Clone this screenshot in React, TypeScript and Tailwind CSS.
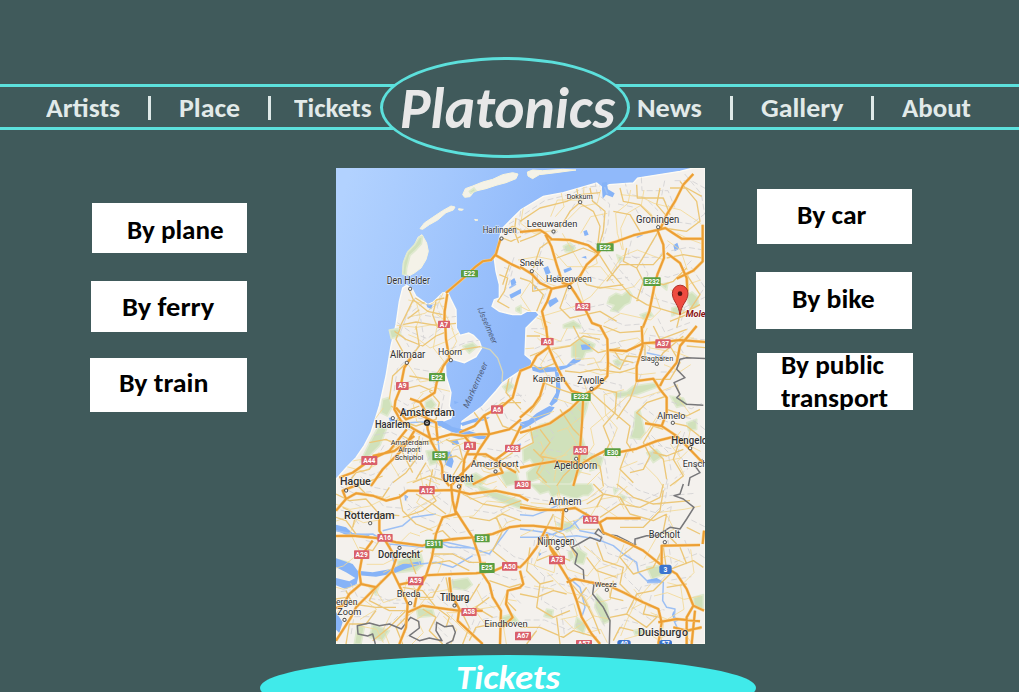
import { useLayoutEffect, useRef, useState, type ReactNode } from "react";

/* Text stretched horizontally to a given width. */
function Fit({ width, className = "", children }: { width: number; className?: string; children: ReactNode }) {
  const ref = useRef<HTMLSpanElement>(null);
  const [scale, setScale] = useState(1);
  useLayoutEffect(() => {
    if (ref.current) setScale(width / ref.current.offsetWidth);
  }, [width]);
  return (
    <span className={`block shrink-0 ${className}`} style={{ width }}>
      <span
        ref={ref}
        className="inline-block origin-left whitespace-nowrap"
        style={{ transform: `scaleX(${scale})` }}
      >
        {children}
      </span>
    </span>
  );
}

/* The map is drawn in six sheets, three units to the pixel. */
type Sheet = {
  x: number;
  y: number;
  green: string[];
  water: string[];
  river: string[];
  border: string[];
  minor: string[];
  major: string[];
};

const LAND =
  "M0 934L30 900L60 869L85 832L105 794L130 714L150 624L165 534L180 470L190 400L200 360L212 352L228 362L240 385L275 410L292 402L320 375L335 373L345 395L360 425L361 480L372 502L398 495L412 502L430 520L437 540L420 566L385 584L350 574L328 584L330 624L345 674L340 714L350 734L345 750L310 764L320 782L345 778L374 795L378 760L440 714L480 669L500 644L552 609L587 594L587 577L567 560L570 480L610 440L600 430L572 430L555 440L530 440L490 430L468 415L475 395L490 390L490 350L480 310L474 265L490 240L490 210L500 180L530 150L555 125L622 85L682 74L782 45L800 60L820 50L892 45L905 30L1032 10L1072 0L1107 0V1428H0Z";

const ISLANDS = [
  "M380 80L388 62L410 54L440 42L470 34L500 20L530 14L546 18L540 32L510 44L480 52L450 62L415 70L402 86L386 88Z",
  "M252 182L265 165L290 148L320 128L345 114L357 117L352 126L330 134L305 156L280 170L260 184Z",
  "M368 122L382 124L378 127L368 126Z",
  "M416 154L426 156L418 158Z",
  "M258 200L272 225L277 250L270 275L255 300L235 315L222 322L200 318L202 285L213 255L235 232L246 208Z",
  "M574 12L590 6L620 8L680 4L720 6L660 14L610 20L590 32L576 24Z",
];

const SHEETS: Sheet[] = [
  {
    x: 0,
    y: 0,
    green: ["M250 208L260 205L256 228L238 248L222 262L212 300L210 322L200 318L203 282L215 252L236 230Z", "M400 70l14 -10l6 8l-16 8Z", "M540 420l15 -8v24l-15 -8Z"],
    water: ["M523 338l12 -8l6 14l-14 12Z", "M520 380l35 -18v14l-30 16Z", "M270 408l20 2l-4 14l-12 -6Z"],
    river: ["M520 360l20 -12"],
    border: [],
    minor: [
      "M218 362L232 395L210 440L190 480",
      "M232 395L275 430L320 440",
      "M238 390L262 405L325 390",
      "M200 470L240 462L300 472L360 466",
      "M250 425L215 452",
      "M300 400L290 440L305 480",
      "M490 320L515 330L505 370L485 400L520 420",
      "M505 190L530 175L555 188",
      "M500 210L525 220L555 205",
      "M540 150L535 190L548 225",
      "M215 280L232 300L228 318L205 310",
      "M520 290L500 350",
    ],
    major: ["M330 375L385 328L420 295L440 280L465 276L480 258L488 230L494 212", "M480 262L525 288L555 302", "M334 378L326 430L325 480"],
  },
  {
    x: 552,
    y: 0,
    green: [
      "M130 235l20 -10l16 14l-8 14l-22 -2Z",
      "M268 388l20 -12l18 6l20 -16l10 14l-6 24l-16 8l-20 20l-22 -4l10 -16l-20 -6Z",
      "M500 380l16 -8l16 14l4 26l-20 12l-12 -18Z",
      "M130 470l30 -12l22 14v8h-52Z",
      "M455 420l25 -8l6 20l-30 12Z",
      "M360 440l30 -10l10 14l-30 10Z",
      "M290 260l20 10l-12 14Z",
      "M420 350l24 -6l-4 22Z",
    ],
    water: [
      "M246 44l14 -2l4 22l20 12l-6 12l-20 -8l-10 12l-2 -28Z",
      "M190 190l10 -4l6 14l-12 4Z",
      "M70 300l14 -6l8 20l-14 8Z",
      "M82 400l26 -12l8 12l-26 18Z",
      "M130 305l22 -8l4 8l-22 10Z",
      "M460 232l12 -8l6 18l-14 8Z",
      "M42 350l10 6l-8 10Z",
      "M184 268l14 -4l2 8Z",
    ],
    river: ["M250 48l12 30", "M110 290l10 24l-16 30", "M350 208l18 -8"],
    border: [],
    minor: [
      "M0 160L60 120L140 100L180 80L240 74",
      "M170 60L178 105L150 130L120 180",
      "M178 105L220 130L240 175L232 240",
      "M210 60L218 100L255 130L250 190L235 240",
      "M300 60L310 100L360 110L400 150",
      "M350 50L352 90L430 90L450 140",
      "M280 130L330 140L360 190",
      "M420 60L410 110L436 140",
      "M480 40L530 100L540 160L500 190L430 180",
      "M0 220L40 205L70 190",
      "M100 212L60 240L40 300",
      "M110 270L190 240L235 258",
      "M145 350L120 420L150 450L240 430L290 460",
      "M238 260L270 310L330 380L380 410L480 440",
      "M415 190L380 250L350 300L370 340L350 400",
      "M435 250L400 290L300 290L260 340",
      "M500 300L460 340L430 350L410 345",
      "M500 320L540 380L500 440L450 460",
      "M38 310V370L90 360",
      "M180 325L200 350L240 360L310 350",
      "M440 270L490 260L548 270",
      "M0 330L30 340L70 380L50 430",
      "M320 240L310 280L350 300",
      "M450 60L500 60L545 85",
      "M480 440L470 480M480 440L540 410",
    ],
    major: [
      "M0 192L60 186L76 196L95 214L150 216L205 232L235 255L250 232L290 220L340 202L412 186L436 180L460 196L485 212L548 212",
      "M76 200L94 235L110 290L128 345L148 350L168 380L196 425L216 465L245 476",
      "M0 296L35 318L60 345L95 362L145 352L180 325L200 290L235 258",
      "M95 362L82 400L66 430L78 480",
      "M412 186L430 230L432 270L412 320L402 360L388 430L368 480",
      "M520 18L490 50L465 100L440 140L420 185",
      "M440 255L480 285L500 330L502 370",
      "M548 170V280L520 308L470 332",
    ],
  },
  {
    x: 0,
    y: 474,
    green: [
      "M140 220l20 -6l8 30l-14 26l-20 -10Z",
      "M268 228l18 -10l14 18l-12 14l-20 -6Z",
      "M128 300l24 8l-20 50l-30 30l-30 20l30 -60Z",
      "M270 375l30 -4l4 40l-22 6Z",
      "M490 440l50 -10l10 40l-40 10Z",
      "M380 455l40 -14l30 20l-20 24l-40 -6Z",
      "M160 12l26 -4l10 20l-30 10Z",
      "M380 60l30 -10l14 12l-24 20Z",
      "M500 182l20 -14l14 12l-20 20Z",
    ],
    water: [
      "M325 380l18 -4l10 30l-6 20l-20 -10Z",
      "M300 285l20 0l30 18l50 12l50 15l8 8l-30 2l-30 -10l-50 -12l-46 -22Z",
      "M372 292l50 -16l40 -2l-12 8l-40 8l-30 10Z",
      "M344 345l20 -4l6 12l-20 4Z",
      "M158 275l14 0l6 10l-16 2Z",
      "M354 225l14 4l-12 6Z",
    ],
    river: ["M200 292l50 -4l50 2", "M304 320l6 60", "M540 360l15 -6", "M210 250l-26 30"],
    border: [],
    minor: [
      "M170 12L210 40L260 60L300 30L325 20",
      "M195 0L180 40L205 85",
      "M212 108L250 60L240 0",
      "M330 90L380 70L433 62",
      "M460 70L485 95L500 140",
      "M212 110L170 150L160 220",
      "M220 150L290 162L325 110",
      "M200 190L250 178L290 195",
      "M165 240L200 260L250 240",
      "M180 280L240 300L300 280L310 230L280 195",
      "M200 330L240 350L280 345L310 380",
      "M250 330L240 400L210 440L170 470",
      "M100 350L150 340L190 360L230 440",
      "M130 380L100 430L60 440L30 480",
      "M310 400L360 390L390 410",
      "M330 340L370 360L380 400L350 450",
      "M400 240L430 280L500 230L555 230",
      "M480 260L500 300L555 320",
      "M440 390L500 400L530 380",
      "M420 410L460 430L530 410L550 440",
      "M230 470L280 450L330 465",
      "M270 410L240 460M290 430L280 480",
      "M520 150L510 200L555 250",
      "M340 345L400 335",
      "M60 460L90 470L140 450",
    ],
    major: [
      "M328 0L330 40L340 96L322 120L302 170L296 200L252 228L270 260L275 310L285 345L303 380L318 420L320 455L340 480",
      "M225 95L205 125L192 190L178 225L175 250L195 285L235 310L290 340L345 325L385 330L405 355L385 400L378 470",
      "M250 228L222 218",
      "M180 245L210 280L250 265L300 290L305 345",
      "M212 310L160 375L105 400L50 440L10 455",
      "M105 480L140 430L200 370L235 315",
      "M235 330L175 375L110 390",
      "M370 320L415 300L445 268L500 240L530 215L545 160L555 130",
      "M385 330L430 325L460 325L520 310L555 280",
      "M445 268L460 325L430 370L410 410L370 450L345 480",
      "M390 385L450 385L490 410L540 440",
      "M410 475L460 450L500 440L480 400L520 370L555 300",
    ],
  },
  {
    x: 552,
    y: 474,
    green: [
      "M30 320L60 296L88 290L130 260L165 240L178 226L205 228L200 250L186 290L182 320L192 350L205 390L180 440L150 476L60 480L66 456L24 470L20 440L44 420L30 400L10 410L8 370L40 350Z",
      "M155 55l30 -20l40 20l-8 20l-20 4l-8 20l-34 -6Z",
      "M280 105l14 -6l14 12l-16 14Z",
      "M280 200l40 -4l20 -16l70 -10v14l-60 22l-60 10Z",
      "M345 258l14 -8l8 34l8 36l-14 20l-30 -4l10 -30Z",
      "M380 380l30 -10l20 20l-30 20Z",
      "M450 210l40 6l10 20l-30 8Z",
      "M210 385l40 10l-10 30l-30 10Z",
      "M500 290l30 -10v30l-24 4Z",
    ],
    water: [
      "M35 122L100 124L140 118L160 98L185 98L180 106L140 126L112 136L60 140L38 134Z",
      "M104 134L116 140L122 190L112 226L95 240L88 234L108 200L108 160Z",
      "M0 290L26 282L50 262L88 240L104 244L90 264L50 284L26 300L0 312Z",
      "M182 56l28 -2l2 16l-26 2Z",
    ],
    river: ["M380 80l60 14"],
    border: ["M558 98L500 95L480 100L470 130L495 155L462 170L480 205L470 215L500 235L550 238", "M548 400L525 420L540 440L510 455L505 480"],
    minor: [
      "M20 30H60M30 90L80 70",
      "M95 70L150 60L190 30L240 40",
      "M160 0L180 40L235 80L300 65",
      "M265 110L300 130L320 90L375 95L375 50",
      "M280 70L300 100L340 110",
      "M375 50L450 60L480 110L450 160L400 160",
      "M410 110L430 80L490 30",
      "M230 185L290 200L285 260L250 300L270 350L250 390",
      "M215 200L270 250L330 300L320 350L340 380",
      "M350 165L330 220L290 280",
      "M440 210L380 230L350 260L400 300L430 310",
      "M440 250L500 270L540 250",
      "M455 290L500 300L550 340",
      "M400 300L370 350L390 390L370 430L330 440",
      "M320 375L300 430L340 470",
      "M40 370L70 400L50 440L80 470",
      "M60 310L90 350L60 390L110 400",
      "M0 370L40 350L30 300",
      "M120 250L160 310L180 330",
      "M170 410L130 450L110 480",
      "M190 400L240 420L250 480",
      "M480 340L460 400L490 450L450 480",
      "M380 350L430 400L440 460",
      "M490 370L440 390L400 380",
      "M70 170L120 190L180 210L220 200",
      "M70 170L60 220L30 260",
      "M110 110L60 130L30 110",
      "M135 135L180 140L230 130L300 140L348 125",
      "M250 0L300 20L365 15",
      "M400 0L420 40L500 10",
      "M500 60L558 65",
    ],
    major: [
      "M78 0L85 62L105 110L130 160L155 195L190 205L186 290L180 370L175 420L215 395L260 372L300 378L350 368L410 345",
      "M84 65L50 90L32 122L0 135",
      "M240 0L262 40L264 110L262 150L230 185L195 205L150 250L90 292L30 312L0 320",
      "M268 72L320 75L370 52L430 48L480 42L558 48",
      "M365 0L368 60L350 120V165L400 158L420 190L440 215L440 260L425 300",
      "M375 292L425 300L470 330L500 360L548 410",
      "M410 345L470 330",
      "M530 0L480 60L470 110L430 160L420 180",
      "M0 425L50 415L110 405L170 410",
      "M175 425L160 480",
      "M75 160L60 210L40 240L0 275",
    ],
  },
  {
    x: 0,
    y: 948,
    green: [
      "M185 230l70 -20l8 30l-20 20l-60 6Z",
      "M0 225L40 235L55 260L30 262L0 240Z",
      "M345 290l50 -8l14 20l-20 16l-40 -4Z",
      "M420 0l50 20l85 30v24l-60 -20l-60 -30Z",
      "M240 370l50 6l6 20l-50 4Z",
      "M110 420l50 20l-20 30l-40 -10Z",
      "M490 400l40 -10l20 24l-50 10Z",
      "M100 310l30 -6l-10 30Z",
      "M65 420l20 10l-10 50h-20Z",
    ],
    water: [
      "M0 223L50 240L65 260L110 265L165 255L200 240L255 232V242L215 252L175 268L120 278L68 274L62 300L30 316L0 304V282L40 292L58 282L30 265L0 250Z",
      "M0 385l20 30l-10 32l-10 -10Z",
      "M0 122l30 8l20 18l50 2v8l-60 0l-40 -20Z",
      "M205 30l12 8l-10 14Z",
    ],
    river: [
      "M0 140L60 152L110 150L160 180L175 240",
      "M140 140L200 125L230 100L300 90",
      "M160 180L260 190L330 175L400 190L460 210L520 130",
      "M255 240L300 235L350 250L410 215",
      "M300 170L340 190L420 192",
    ],
    border: ["M118 480L110 450L95 456L66 450L64 425L100 417L130 425L160 420L196 435L224 400L248 412L250 432L220 455L250 470L280 462L318 470L300 440L302 415L325 428L350 425L358 445L350 470L330 480"],
    minor: [
      "M0 30L40 50L90 45L130 90L190 95",
      "M60 0L90 30L140 40L160 10",
      "M20 70L60 90L50 130",
      "M190 30L200 80L240 120L290 140",
      "M240 30L290 60L330 90",
      "M270 0L300 50L260 80L200 100",
      "M380 30L440 60L500 70L555 50",
      "M400 100L460 110L500 90L555 110",
      "M290 150L320 140L350 170L400 160",
      "M290 210L350 210L400 235L450 235",
      "M280 240L340 230L400 260",
      "M330 280L340 330L400 350L430 300",
      "M460 290L520 310L555 300",
      "M200 310L260 320L300 370L340 400L330 430",
      "M120 310L100 350L160 380L210 380",
      "M30 320L50 360L120 370L180 370",
      "M220 390L180 430L200 480",
      "M210 380L160 430L110 470",
      "M120 380L90 420L40 420L30 480",
      "M260 375L300 400L280 440L320 480",
      "M375 380L400 430L380 480",
      "M460 340L420 370L470 400",
      "M470 420L420 430L400 470",
      "M510 350L540 380",
      "M240 270L220 220L260 200",
      "M480 100L500 140L470 200L520 240L555 250",
      "M0 100L30 110L60 150",
      "M130 170L110 200L70 190",
      "M310 300L290 340L250 340",
      "M0 345L30 340",
    ],
    major: [
      "M0 80L30 45L60 28L110 35L150 50L190 40L215 20L270 20L350 18L400 30L480 20L555 36",
      "M30 45L20 20L70 0",
      "M0 156L50 155L120 162L180 175L260 185L290 175L350 165L415 160L470 150L520 130L555 125",
      "M130 90L130 140L160 190L180 225L168 260L190 305L215 360L210 430L190 480",
      "M110 170L80 210L70 265L75 300L40 330L20 365L0 372",
      "M75 300L120 310L168 262",
      "M120 310L60 370L45 400L0 470",
      "M345 0L350 50L360 90L320 100L300 150L288 220L270 275L245 320L235 370",
      "M375 0L365 50L358 80L410 160L430 220L440 270L460 300L470 340L495 380L492 480",
      "M270 274L350 270L420 268L470 262L510 245L555 250",
      "M188 302L245 290L270 275",
      "M215 385L260 365L330 375L370 380L440 380",
      "M340 280L345 330L370 375L365 410L440 480",
      "M555 310L515 320L510 360L530 400L500 430",
    ],
  },
  {
    x: 552,
    y: 948,
    green: [
      "M30 0H215L220 18L205 34L190 34L170 44L150 40L120 30L96 40L86 22L60 30Z",
      "M110 120l40 -6l20 16l-30 14Z",
      "M170 190l30 20l-10 30l-30 -4Z",
      "M145 205l12 -6l6 22l-14 10Z",
      "M230 330l30 30l10 50l-20 10l-26 -50Z",
      "M380 250l40 -6l16 26l-40 16Z",
      "M520 340l30 -8v44l-28 -6Z",
      "M80 375l20 4l-4 24l-24 -6Z",
      "M340 440l30 -6l6 14l-30 6Z",
      "M170 400l30 20l-10 30l-26 -20Z",
      "M300 30l20 10l-14 14Z",
      "M280 10l14 8l-10 12Z",
    ],
    water: ["M55 205l10 4l-8 8Z", "M380 288l30 -6l18 10l-20 6l-26 0Z", "M460 380l6 20l10 10l-12 4l-8 -20Z"],
    river: [
      "M0 135L40 140L80 146L120 160L170 155L230 165L280 185L310 210L350 235L355 265L385 295L430 295L428 350L440 370L465 375L462 410L480 450",
      "M0 160L50 160L100 150L150 130L200 85",
      "M120 60L80 80L40 95L0 92",
      "M145 280L180 310L195 370L185 400",
      "M160 110L180 140L230 150",
    ],
    border: [
      "M490 0L480 30L462 35L490 45L522 70L500 105L480 135L450 130L410 155L380 155L345 165V184L320 170L290 155L250 150L235 135L225 148L245 160L240 172L210 160L175 180L155 190L172 210L165 240L190 258L192 290L222 300L218 330L250 370L270 410L268 480",
    ],
    minor: [
      "M0 60L50 70L130 80",
      "M200 60L250 30L300 40L330 90L400 110L440 90",
      "M220 0L250 30L230 70",
      "M240 100L300 60L360 70L420 40L430 0",
      "M290 0L340 40L400 60L510 50",
      "M430 20L420 80L370 130L300 130",
      "M440 90L430 140L470 180",
      "M350 180L300 220L340 270L400 250L430 190",
      "M230 175L250 230L310 250L300 300L350 350",
      "M200 220L230 260L290 280",
      "M430 190L440 260L520 230L550 250",
      "M460 260L400 320L350 330L320 390L270 400",
      "M320 390L380 430L410 400",
      "M30 190L20 260L60 300L100 290",
      "M60 300L50 370L100 400L150 380",
      "M0 330L50 340L100 320L140 330",
      "M0 430L60 430L130 460L160 440L230 460",
      "M150 295L190 340L220 400L240 450",
      "M200 310L170 350L210 370",
      "M100 90L80 130L130 150L170 220",
      "M50 230L100 210L150 230",
      "M280 290L270 340L310 350",
      "M340 440L300 430L280 470",
      "M380 355L370 390L420 400",
      "M500 130L540 150M480 190L500 240",
      "M20 480L50 440M110 400L120 480",
      "M440 310L500 300",
    ],
    major: [
      "M0 36L25 50M0 70L60 78L120 78L165 72L205 95L240 118L250 145L330 180L370 200L420 240L470 270L500 315L520 365L500 400V480",
      "M130 78L125 135L80 130L40 125L0 125",
      "M240 115L260 103H362",
      "M80 130L50 190L20 230L0 250",
      "M80 150L92 195L120 245L150 295L170 350L185 400L215 450L240 480",
      "M92 190L130 240",
      "M140 295L165 285L210 295L260 302L310 325L370 355L415 375L425 415L415 480",
      "M425 240L425 185L540 183",
      "M415 415L470 405L540 412",
      "M520 365L552 380M525 380L515 480",
      "M548 180L552 140",
      "M0 260L10 300L0 310",
      "M460 430L500 440L545 430",
    ],
  },
];

type Label = [text: string, x: number, baseline: number, width: number, size: number, bold?: boolean];
const CITIES: Label[] = [
  ["Harlingen", 440, 195, 102, 25],
  ["Den Helder", 152, 349, 130, 31],
  ["Dokkum", 692, 93, 78, 23],
  ["Leeuwarden", 572, 176, 152, 28],
  ["Groningen", 900, 164, 130, 30],
  ["Sneek", 551, 293, 72, 28],
  ["Heerenveen", 630, 341, 137, 26],
  ["Alkmaar", 162, 571, 106, 30],
  ["Hoorn", 306, 562, 72, 29],
  ["Amsterdam", 191, 745, 166, 33, true],
  ["Haarlem", 117, 780, 106, 30, true],
  ["Amsterdam", 164, 830, 114, 23],
  ["Airport", 187, 852, 66, 22],
  ["Schiphol", 176, 876, 86, 23],
  ["Amersfoort", 404, 896, 144, 29],
  ["Utrecht", 320, 941, 92, 31, true],
  ["Hague", 12, 951, 92, 32, true],
  ["Kampen", 590, 641, 98, 27],
  ["Zwolle", 724, 649, 80, 30],
  ["Slagharen", 914, 579, 98, 23],
  ["Almelo", 964, 752, 84, 29],
  ["Hengelo", 1006, 829, 108, 31, true],
  ["Ensch", 1040, 896, 74, 29],
  ["Apeldoorn", 654, 902, 130, 31],
  ["Rotterdam", 24, 1052, 152, 34, true],
  ["Dordrecht", 126, 1170, 126, 30, true],
  ["Breda", 182, 1288, 72, 29],
  ["Tilburg", 312, 1300, 88, 34, true],
  ["ergen", 0, 1311, 64, 28],
  ["Zoom", 4, 1340, 72, 28],
  ["Eindhoven", 445, 1377, 130, 28],
  ["Arnhem", 638, 1011, 98, 30],
  ["Nijmegen", 604, 1132, 112, 31],
  ["Bocholt", 938, 1111, 94, 30],
  ["Weeze", 776, 1256, 66, 21],
  ["Duisburg", 906, 1405, 130, 35, true],
  ["o", 1038, 1405, 18, 35, true],
];

const DOTS = [
  [222, 362], [652, 190], [966, 177], [587, 309], [700, 357], [732, 102], [496, 211], [212, 584], [344, 576], [170, 750],
  [478, 910], [766, 662], [962, 587], [1010, 764], [1062, 840], [720, 872], [30, 967], [102, 1065], [190, 1139],
  [222, 1305], [355, 1312], [690, 1026], [664, 1140], [986, 1122], [368, 955], [25, 1355], [812, 1265],
];

type Shield = [text: string, x: number, y: number, w: number, h: number, kind: "a" | "e" | "d"];
const SHIELDS: Shield[] = [
  ["E22", 375, 306, 51, 22, "e"],
  ["A7", 306, 458, 36, 22, "a"],
  ["E22", 782, 226, 51, 24, "e"],
  ["E232", 922, 328, 52, 26, "e"],
  ["A32", 718, 405, 45, 23, "a"],
  ["E22", 279, 615, 48, 25, "e"],
  ["A9", 180, 642, 38, 24, "a"],
  ["A6", 465, 712, 36, 25, "a"],
  ["A1", 384, 821, 36, 25, "a"],
  ["A28", 507, 830, 46, 22, "a"],
  ["E35", 289, 850, 46, 27, "e"],
  ["A44", 76, 864, 48, 27, "a"],
  ["A6", 615, 510, 38, 22, "a"],
  ["A37", 958, 514, 46, 27, "a"],
  ["E232", 706, 675, 58, 24, "e"],
  ["A50", 712, 834, 44, 26, "a"],
  ["E30", 806, 841, 48, 23, "e"],
  ["A30", 536, 938, 48, 25, "a"],
  ["A12", 250, 954, 46, 25, "a"],
  ["A16", 124, 1098, 46, 23, "a"],
  ["A29", 54, 1147, 46, 26, "a"],
  ["E311", 268, 1115, 52, 26, "e"],
  ["E31", 416, 1099, 45, 24, "e"],
  ["E25", 430, 1185, 46, 30, "e"],
  ["A50", 498, 1182, 46, 26, "a"],
  ["A59", 216, 1226, 46, 26, "a"],
  ["A58", 376, 1320, 46, 24, "a"],
  ["A67", 537, 1391, 48, 26, "a"],
  ["A12", 741, 1043, 46, 24, "a"],
  ["A73", 639, 1163, 48, 26, "a"],
  ["A57", 720, 1416, 48, 20, "a"],
  ["3", 970, 1190, 37, 28, "d"],
  ["40", 844, 1416, 40, 20, "d"],
  ["57", 970, 1416, 38, 20, "d"],
];

const SHIELD_FILL = { a: "#d9606a", e: "#5a9e41", d: "#3b74cf" };

function NetherlandsMap() {
  return (
    <svg viewBox="0 0 1107 1428" preserveAspectRatio="none" className="block h-[476px] w-[369px]">
      <defs>
        <linearGradient id="sea" x1="0" y1="0.1" x2="0.5" y2="0.3">
          <stop offset="0" stopColor="#b2d2ff" />
          <stop offset="0.45" stopColor="#a4c8fd" />
          <stop offset="1" stopColor="#90b9fa" />
        </linearGradient>
        <clipPath id="mainland">
          <path d={LAND} />
        </clipPath>
      </defs>
      <rect width="1107" height="1428" fill="url(#sea)" />
      <path d={LAND} fill="#f4f1ed" stroke="#fdfbf4" strokeWidth="4" />
      {ISLANDS.map((d) => (
        <path key={d} d={d} fill="#f4f2e8" stroke="#f8f4dc" strokeWidth="3" />
      ))}
      {SHEETS.map((s) => (
        <g key={`base-${s.x}-${s.y}`} transform={`translate(${s.x} ${s.y})`} strokeLinejoin="round">
          <path d={s.green.join("")} fill="#d0e1bb" stroke="#dfe9cf" strokeWidth="5" />
          <path d={s.water.join("")} fill="#86b3f7" />
        </g>
      ))}
      <g clipPath="url(#mainland)">
        {SHEETS.map((s) => (
          <g key={`minor-${s.x}-${s.y}`} transform={`translate(${s.x} ${s.y})`} fill="none" strokeLinejoin="round">
            <path d={s.minor.join("")} transform="translate(14 -22)" stroke="#d2d1d3" strokeWidth="2.5" strokeDasharray="18 9" />
            <path d={s.river.join("")} stroke="#9dc0f4" strokeWidth="4.5" />
            <path d={s.minor.join("")} transform="translate(542 6) scale(-1 1)" stroke="#f3d894" strokeWidth="2.5" />
            <path d={s.minor.join("")} stroke="#ecc778" strokeWidth="4" />
          </g>
        ))}
      </g>
      {SHEETS.map((s) => (
        <g key={`major-${s.x}-${s.y}`} transform={`translate(${s.x} ${s.y})`} fill="none" strokeLinejoin="round">
          <path d={s.border.join("")} stroke="#77777a" strokeWidth="4.5" />
          <path d={s.major.join("")} stroke="#f9cf8c" strokeWidth="9" />
          <path d={s.major.join("")} stroke="#ec9f34" strokeWidth="6" />
        </g>
      ))}
      <path d="M433 536L462 545L485 570L500 612L498 642" fill="none" stroke="#d5d6bd" strokeWidth="4" />
      {DOTS.map(([x, y]) => (
        <rect key={`${x}-${y}`} x={x - 4} y={y - 4} width="9" height="9" rx="3" fill="#fff" stroke="#444" strokeWidth="3" />
      ))}
      <circle cx="273" cy="764" r="7" fill="#fff" stroke="#222" strokeWidth="5" />
      <circle cx="273" cy="764" r="2.5" fill="#222" />
      <g className="font-['Roboto',sans-serif]" fill="#303030" stroke="#fff" strokeWidth="4" strokeOpacity="0.6" paintOrder="stroke" strokeLinejoin="round">
        {CITIES.map(([text, x, y, w, size, bold]) => (
          <text key={`${text}-${y}-${x}`} x={x} y={y} textLength={w} lengthAdjust="spacingAndGlyphs" fontSize={size} fontWeight={bold ? 500 : 400}>
            {text}
          </text>
        ))}
      </g>
      <g className="font-['Roboto',sans-serif]" fill="#52627f" fontSize="25" fontStyle="italic">
        <text transform="translate(424 422) rotate(67)" textLength="116" lengthAdjust="spacingAndGlyphs">IJsselmeer</text>
        <text transform="translate(396 722) rotate(-66)" textLength="148" lengthAdjust="spacingAndGlyphs">Markermeer</text>
      </g>
      {SHIELDS.map(([text, x, y, w, h, kind]) => (
        <g key={`${text}-${x}-${y}`}>
          <rect x={x} y={y} width={w} height={h} rx={kind === "d" ? 8 : 2} fill={SHIELD_FILL[kind]} />
          <text x={x + w / 2} y={y + h / 2 + 7} textAnchor="middle" fill="#fff" fontSize="20" className="font-['Roboto',sans-serif] font-bold">
            {text}
          </text>
        </g>
      ))}
      <path d="M1031 440C1030 410 1009 400 1009 376A23 24 0 0 1 1056 376C1056 400 1034 410 1033 440Z" fill="#ee4b40" stroke="#a92f27" strokeWidth="3" />
      <circle cx="1032" cy="377" r="7" fill="#4e1511" />
      <text x="1049" y="446" fill="#8c1414" stroke="#fff" strokeWidth="3" paintOrder="stroke" fontSize="25" textLength="60" lengthAdjust="spacingAndGlyphs" className="font-['Roboto',sans-serif] font-bold italic">
        Mole
      </text>
    </svg>
  );
}

function Divider() {
  return <span className="mx-7 h-6 w-[3px] shrink-0 bg-[#dfe9e8]" />;
}

function Header() {
  return (
    <header className="relative mt-[84px] h-[46px] shrink-0">
      <nav className="flex h-full items-center border-y-[3px] border-[#5ce0dc] pt-0.5 pr-[48px] pl-[46px] text-[26.5px] leading-8 font-bold text-[#e2eae9]">
        <div className="flex items-center">
          <Fit width={74}>Artists</Fit>
          <Divider />
          <Fit width={61}>Place</Fit>
          <Divider />
          <Fit width={78} className="-ml-[5px]">Tickets</Fit>
        </div>
        <div className="ml-auto flex items-center">
          <Fit width={65}>News</Fit>
          <Divider />
          <Fit width={82}>Gallery</Fit>
          <Divider />
          <Fit width={69}>About</Fit>
        </div>
      </nav>
      <h1 className="absolute top-[-27px] left-[380px] flex h-[101px] w-[250px] items-center rounded-[50%] border-[3px] border-[#5ce0dc] bg-[#405a5b] pl-[17px] text-[59px] leading-[60px] font-bold text-[#e8e8e8] italic">
        <Fit width={215}>Platonics</Fit>
      </h1>
    </header>
  );
}

function Option({ className, width, children }: { className: string; width: number; children: ReactNode }) {
  return (
    <button type="button" className={`flex shrink-0 items-center bg-white text-left text-[26px] leading-8 font-bold text-black ${className}`}>
      <Fit width={width}>{children}</Fit>
    </button>
  );
}

export default function App() {
  return (
    <div className="h-[693px] w-[1019px] overflow-hidden bg-white font-['Carlito','Lato',sans-serif]">
      <div className="flex h-[692px] flex-col overflow-hidden bg-[#405a5b]">
        <Header />
        <main className="mt-[38px] flex h-[476px] shrink-0">
          <div className="flex w-[247px] flex-col items-end pt-[35px]">
            <Option className="h-[50px] w-[155px] pt-1 pl-[35px]" width={97}>By plane</Option>
            <Option className="mt-7 h-[51px] w-[156px] pl-[31px]" width={92}>By ferry</Option>
            <Option className="mt-[26px] h-[54px] w-[157px] pb-1 pl-[29px]" width={89}>By train</Option>
          </div>
          <div className="ml-[89px] w-[369px]">
            <NetherlandsMap />
          </div>
          <div className="ml-[51px] flex w-[157px] flex-col pt-[21px]">
            <Option className="ml-px h-[55px] w-[155px] pb-[3px] pl-[40px]" width={69}>By car</Option>
            <Option className="mt-7 h-[57px] w-[156px] pb-[3px] pl-[36px]" width={83}>By bike</Option>
            <button type="button" className="mt-6 ml-px block h-[57px] w-[156px] shrink-0 overflow-hidden bg-white pl-[24px] text-left text-[26px] leading-[33px] font-bold text-black">
              <span className="-mt-[4px] block">
                <Fit width={103}>By public</Fit>
                <Fit width={107}>transport</Fit>
              </span>
            </button>
          </div>
        </main>
        <footer className="mt-[11px] ml-[260px] flex h-[66px] w-[496px] shrink-0 justify-center rounded-[50%] bg-[#40eaea] pt-px text-[35px] leading-[42px] font-bold text-white italic">
          <Fit width={104}>Tickets</Fit>
        </footer>
      </div>
    </div>
  );
}
